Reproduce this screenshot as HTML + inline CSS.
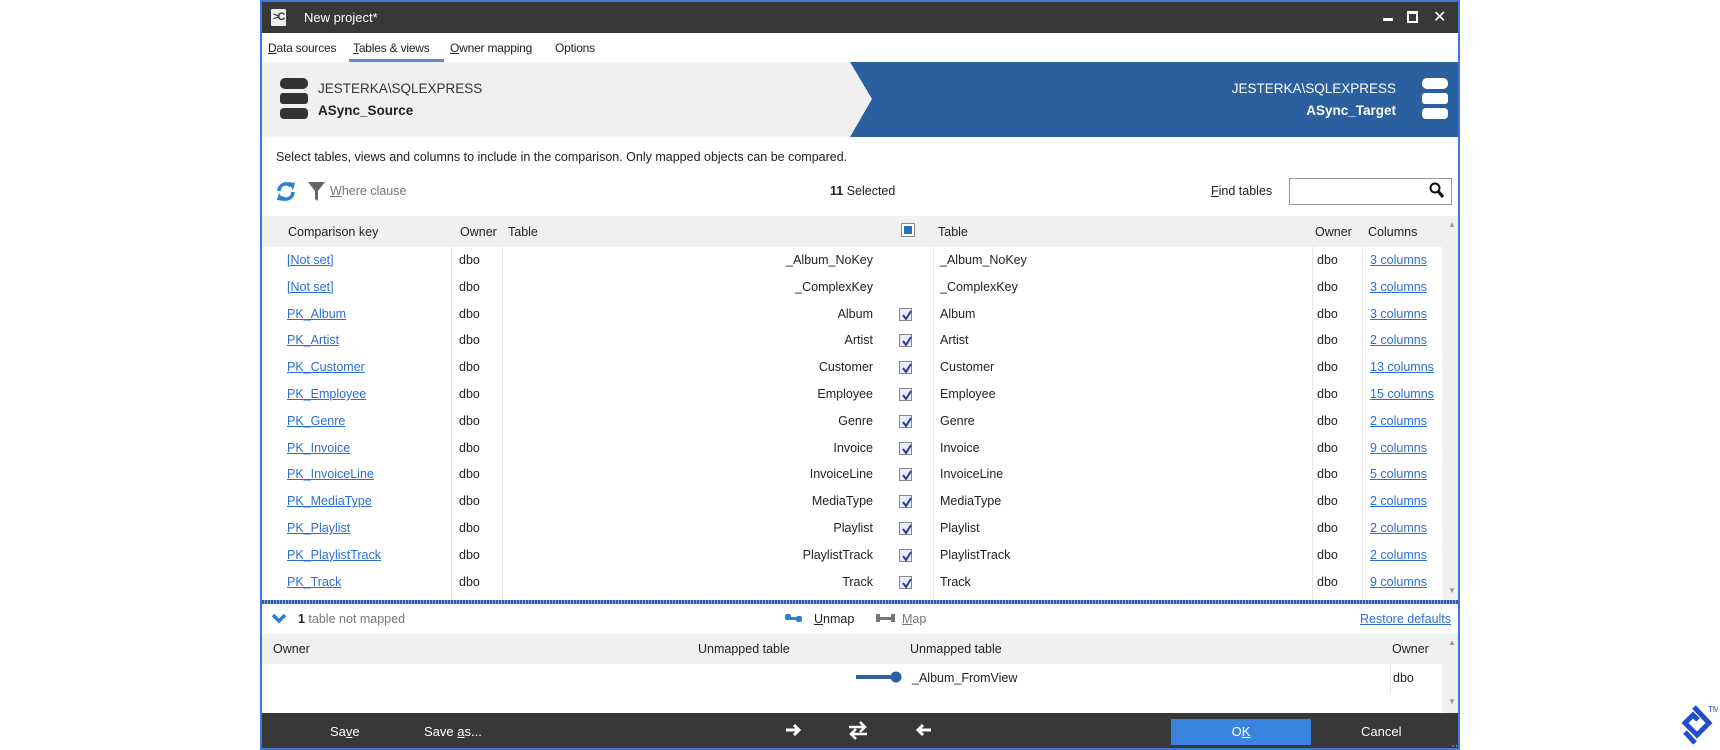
<!DOCTYPE html>
<html><head><meta charset="utf-8"><style>
*{margin:0;padding:0;box-sizing:border-box}
body{width:1720px;height:750px;background:#fff;font-family:"Liberation Sans",sans-serif;font-size:12.5px;color:#222;position:relative;overflow:hidden}
.a{position:absolute;white-space:nowrap}
.win{position:absolute;left:260px;top:0;width:1200px;height:750px;border:2px solid #3c78d8;border-top:2px solid #3c78d8;background:#fff;overflow:hidden}
.lnk{color:#2a6fd6;text-decoration:underline}
.row{position:absolute;left:0;width:1200px;height:27px;line-height:27px}
.cb{position:absolute;width:13px;height:13px;border:1px solid #888;background:#e8eef8;top:7px}
.cb svg{position:absolute;left:1px;top:1px}
u{text-decoration:underline}
.m{font-size:12px;letter-spacing:-0.2px}
</style></head><body>
<div class="win">
 <div class="a" style="left:0;top:0;width:1200px;height:31px;background:#383838"></div>
 <div class="a" style="left:9px;top:7px;width:15px;height:17px;background:#eee;border-radius:1px"></div>
 <div class="a" style="left:11px;top:9px;color:#383838;font-size:11px;font-weight:bold;letter-spacing:-2px">&gt;C</div>
 <div class="a" style="left:42px;top:8px;color:#fff;font-size:13px">New project*</div>
 <div class="a" style="left:1121px;top:16px;width:10px;height:3px;background:#fff"></div>
 <div class="a" style="left:1145px;top:9px;width:11px;height:12px;border:2px solid #fff;border-top-width:3px"></div>
 <div class="a" style="left:1171px;top:5px;color:#fff;font-size:16px">✕</div>
 <div class="a m" style="left:6px;top:39px"><u>D</u>ata sources</div>
 <div class="a m" style="left:91px;top:39px"><u>T</u>ables &amp; views</div>
 <div class="a" style="left:87px;top:57px;width:95px;height:3px;background:#5b8ad8"></div>
 <div class="a m" style="left:188px;top:39px"><u>O</u>wner mapping</div>
 <div class="a m" style="left:293px;top:39px">Options</div>
 <div class="a" style="left:0;top:60px;width:1200px;height:75px;background:#f0f0f0"></div>
 <svg class="a" style="left:0;top:60px" width="1200" height="75"><polygon points="588,0 1200,0 1200,75 588,75 610,37" fill="#2a5fa0"/></svg>
 <svg class="a" style="left:18px;top:76px" width="30" height="43"><rect x="0" y="0" width="28" height="11" rx="5" fill="#333"/><rect x="0" y="15" width="28" height="11" rx="3" fill="#333"/><rect x="0" y="30" width="28" height="11" rx="4" fill="#333"/></svg>
 <div class="a" style="left:56px;top:79px;font-size:13.5px;color:#333">JESTERKA\SQLEXPRESS</div>
 <div class="a" style="left:56px;top:101px;font-size:13.5px;font-weight:bold;color:#222">ASync_Source</div>
 <div class="a" style="right:62px;top:79px;font-size:13.5px;color:#fff">JESTERKA\SQLEXPRESS</div>
 <div class="a" style="right:62px;top:101px;font-size:13.5px;font-weight:bold;color:#fff">ASync_Target</div>
 <svg class="a" style="left:1160px;top:76px" width="30" height="43"><rect x="0" y="0" width="26" height="11" rx="5" fill="#fff"/><rect x="0" y="15" width="26" height="11" rx="3" fill="#fff"/><rect x="0" y="30" width="26" height="11" rx="4" fill="#fff"/></svg>
 <div class="a" style="left:14px;top:148px">Select tables, views and columns to include in the comparison. Only mapped objects can be compared.</div>
 <svg class="a" style="left:14px;top:180px" width="20" height="19" viewBox="0 0 20 19"><path d="M3 9a7 7 0 0 1 12-5" stroke="#2a7fd6" stroke-width="3.5" fill="none"/><polygon points="12,0 19,1 17,8" fill="#2a7fd6"/><path d="M17 10a7 7 0 0 1-12 5" stroke="#2a7fd6" stroke-width="3.5" fill="none"/><polygon points="8,19 1,18 3,11" fill="#2a7fd6"/></svg>
 <svg class="a" style="left:46px;top:180px" width="18" height="20"><polygon points="0,0 17,0 10,9 10,19 7,17 7,9" fill="#666"/></svg>
 <div class="a" style="left:68px;top:182px;color:#777"><u>W</u>here clause</div>
 <div class="a" style="left:568px;top:182px"><b>11</b> Selected</div>
 <div class="a" style="left:949px;top:182px"><u>F</u>ind tables</div>
 <div class="a" style="left:1027px;top:176px;width:163px;height:27px;border:1px solid #999"></div>
 <svg class="a" style="left:1167px;top:180px" width="16" height="17"><circle cx="6" cy="6" r="4.5" stroke="#111" stroke-width="2" fill="none"/><line x1="9" y1="9" x2="14" y2="15" stroke="#111" stroke-width="3"/></svg>
 <div class="a" style="left:0;top:214px;width:1180px;height:31px;background:#f0f0f0"></div>
 <div class="a" style="left:1180px;top:214px;width:18px;height:386px;background:#f0f0f0"></div>
 <div class="a" style="left:1186px;top:218px;font-size:8px;color:#999">▲</div>
 <div class="a" style="left:1186px;top:584px;font-size:8px;color:#999">▼</div>
 <div class="a" style="left:26px;top:223px">Comparison key</div>
 <div class="a" style="left:198px;top:223px">Owner</div>
 <div class="a" style="left:246px;top:223px">Table</div>
 <div class="a" style="left:639px;top:221px;width:14px;height:14px;border:1px solid #888;background:#fff"><div style="margin:2px;width:8px;height:8px;background:#2a6fb0"></div></div>
 <div class="a" style="left:676px;top:223px">Table</div>
 <div class="a" style="left:1053px;top:223px">Owner</div>
 <div class="a" style="left:1106px;top:223px">Columns</div>
 <div class="a" style="left:189px;top:245px;width:1px;height:354px;background:#e6e6e6"></div>
 <div class="a" style="left:240px;top:245px;width:1px;height:354px;background:#e6e6e6"></div>
 <div class="a" style="left:671px;top:245px;width:1px;height:354px;background:#e6e6e6"></div>
 <div class="a" style="left:1050px;top:245px;width:1px;height:354px;background:#e6e6e6"></div>
 <div class="a" style="left:1100px;top:245px;width:1px;height:354px;background:#e6e6e6"></div>
 <div id="rows"></div>
 <div class="a" style="left:0;top:598px;width:1200px;height:4px;background:repeating-linear-gradient(90deg,#2a5fa0 0 2px,#8fb0e0 2px 3px)"></div>
 <svg class="a" style="left:10px;top:611px" width="14" height="12"><path d="M1 2l6 6 6-6" stroke="#2a7fd6" stroke-width="3.5" fill="none"/></svg>
 <div class="a" style="left:36px;top:610px;color:#777"><b style="color:#222">1</b> table not mapped</div>
 <svg class="a" style="left:523px;top:611px" width="18" height="12"><rect x="0" y="1" width="6" height="6" rx="2" fill="#2a7fd6"/><rect x="4" y="4" width="8" height="3" fill="#2a7fd6"/><rect x="11" y="3" width="6" height="6" rx="2" fill="#2a7fd6"/></svg>
 <div class="a" style="left:552px;top:610px"><u>U</u>nmap</div>
 <svg class="a" style="left:614px;top:612px" width="20" height="10"><rect x="0" y="0" width="4" height="8" fill="#777"/><rect x="3" y="3" width="13" height="3" fill="#777"/><rect x="15" y="0" width="4" height="8" fill="#777"/></svg>
 <div class="a" style="left:640px;top:610px;color:#777"><u>M</u>ap</div>
 <div class="a lnk" style="left:1098px;top:610px">Restore defaults</div>
 <div class="a" style="left:0;top:632px;width:1180px;height:30px;background:#f0f0f0"></div>
 <div class="a" style="left:1180px;top:632px;width:18px;height:79px;background:#f0f0f0"></div>
 <div class="a" style="left:1186px;top:636px;font-size:8px;color:#999">▲</div>
 <div class="a" style="left:1186px;top:695px;font-size:8px;color:#999">▼</div>
 <div class="a" style="left:11px;top:640px">Owner</div>
 <div class="a" style="left:436px;top:640px">Unmapped table</div>
 <div class="a" style="left:648px;top:640px">Unmapped table</div>
 <div class="a" style="left:1130px;top:640px">Owner</div>
 <div class="a" style="left:1128px;top:662px;width:1px;height:30px;background:#e6e6e6"></div>
 <svg class="a" style="left:594px;top:668px" width="46" height="14"><rect x="0" y="5" width="40" height="4" fill="#2a5fa0"/><circle cx="40" cy="7" r="5.5" fill="#2a5fa0"/></svg>
 <div class="a" style="left:650px;top:669px">_Album_FromView</div>
 <div class="a" style="left:1131px;top:669px">dbo</div>
 <div class="a" style="left:0;top:711px;width:1200px;height:40px;background:#383838"></div>
 <div class="a" style="left:68px;top:722px;color:#fff;font-size:13px">Sa<u>v</u>e</div>
 <div class="a" style="left:162px;top:722px;color:#fff;font-size:13px">Save <u>a</u>s...</div>
 <svg class="a" style="left:524px;top:721px" width="16" height="14"><path d="M0 7h13M8 2l5 5-5 5" stroke="#fff" stroke-width="3" fill="none"/></svg>
 <svg class="a" style="left:585px;top:717px" width="22" height="22"><path d="M2 8h16M13 3l5 5-5 5" stroke="#fff" stroke-width="2.5" fill="none"/><path d="M20 15H4M9 10l-5 5 5 5" stroke="#fff" stroke-width="2.5" fill="none"/></svg>
 <svg class="a" style="left:653px;top:721px" width="16" height="14"><path d="M16 7H3M8 2L3 7l5 5" stroke="#fff" stroke-width="3" fill="none"/></svg>
 <div class="a" style="left:909px;top:717px;width:140px;height:26px;background:#3a84e0;color:#fff;text-align:center;line-height:26px;font-size:13px">O<u>K</u></div>
 <div class="a" style="left:1099px;top:722px;color:#fff;font-size:13px">Cancel</div>
 <div class="a" style="left:1187px;top:738px;color:#ccc;font-size:8px">⠠⠴</div>
</div>
<svg class="a" style="left:1672px;top:702px" width="46" height="48"><path d="M22 5l15 16-12 12-12-12 8-8 5 5" stroke="#204ecf" stroke-width="5" fill="none" stroke-linejoin="miter"/><path d="M13 30l10 11" stroke="#204ecf" stroke-width="5"/><text x="36" y="10" font-size="8" fill="#204ecf" font-family="Liberation Sans">TM</text></svg>
<script>
var d=[["[Not set]","_Album_NoKey","3 columns",0],["[Not set]","_ComplexKey","3 columns",0],["PK_Album","Album","3 columns",1],["PK_Artist","Artist","2 columns",1],["PK_Customer","Customer","13 columns",1],["PK_Employee","Employee","15 columns",1],["PK_Genre","Genre","2 columns",1],["PK_Invoice","Invoice","9 columns",1],["PK_InvoiceLine","InvoiceLine","5 columns",1],["PK_MediaType","MediaType","2 columns",1],["PK_Playlist","Playlist","2 columns",1],["PK_PlaylistTrack","PlaylistTrack","2 columns",1],["PK_Track","Track","9 columns",1]];
var h="";d.forEach(function(r,i){var t=245+i*26.8;
h+='<div class="row" style="top:'+t+'px"><span class="a lnk" style="left:25px">'+r[0]+'</span><span class="a" style="left:197px">dbo</span><span class="a" style="right:589px;text-align:right">'+r[1]+'</span>'+(r[3]?'<span class="cb" style="left:637px"><svg width="11" height="11"><path d="M2 5l3 4 5-8" stroke="#2a3a9a" stroke-width="2" fill="none"/></svg></span>':'')+'<span class="a" style="left:678px">'+r[1]+'</span><span class="a" style="left:1055px">dbo</span><span class="a lnk" style="left:1108px">'+r[2]+'</span></div>';});
document.getElementById("rows").innerHTML=h;
</script>
</body></html>
